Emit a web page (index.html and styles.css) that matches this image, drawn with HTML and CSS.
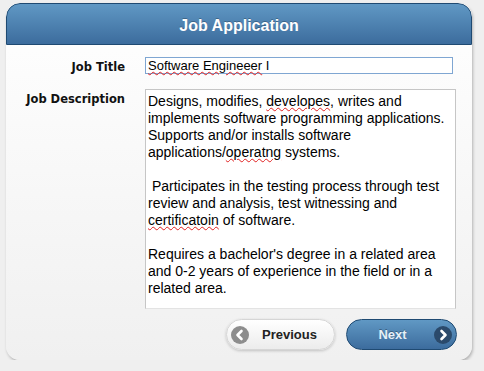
FILE: index.html
```html
<!DOCTYPE html>
<html lang="en">
<head>
    <meta charset="UTF-8">
    <title>Job Application</title>
    <link rel="stylesheet" href="styles.css">
</head>
<body>
    <div class="card">
        <div class="card-header">Job Application</div>
        <div class="card-body">
            <div class="field">
                <label class="field-label">Job Title</label>
                <div class="text-input"><span class="typo">Software Engineeer</span> I</div>
            </div>
            <div class="field">
                <label class="field-label">Job Description</label>
                <div class="text-area">
                    <p>Designs, modifies, <span class="typo">developes</span>, writes and implements software programming applications. Supports and/or installs software applications/<span class="typo">operatng</span> systems.</p>
                    <p>&nbsp;Participates in the testing process through test review and analysis, test witnessing and <span class="typo">certificatoin</span> of software.</p>
                    <p>Requires a bachelor's degree in a related area and 0-2 years of experience in the field or in a related area.</p>
                </div>
            </div>
            <div class="actions">
                <button class="btn btn-prev">
                    <span class="btn-icon">
                        <svg width="18" height="18" viewBox="0 0 18 18"><path d="M10.5 5 L6.5 9 L10.5 13" fill="none" stroke="#fff" stroke-width="2.6" stroke-linecap="round" stroke-linejoin="round"/></svg>
                    </span>
                    <span class="btn-text">Previous</span>
                </button>
                <button class="btn btn-next">
                    <span class="btn-text">Next</span>
                    <span class="btn-icon">
                        <svg width="18" height="18" viewBox="0 0 18 18"><path d="M7.5 5 L11.5 9 L7.5 13" fill="none" stroke="#fff" stroke-width="2.6" stroke-linecap="round" stroke-linejoin="round"/></svg>
                    </span>
                </button>
            </div>
        </div>
    </div>
</body>
</html>
```

FILE: styles.css
```css
body {
    margin: 0;
    padding: 3px 12px 0 6px;
    background: #efefef;
    font-family: "Liberation Sans", Arial, sans-serif;
}
.card {
    width: 466px;
    height: 357px;
    border-radius: 14px;
    background: linear-gradient(#ffffff, #f0f0f0);
    box-shadow: 1px 2px 3px rgba(0, 0, 0, 0.25);
    display: flex;
    flex-direction: column;
    overflow: hidden;
}
.card-header {
    height: 38px;
    padding-top: 2px;
    line-height: 40px;
    text-align: center;
    color: #fff;
    font-weight: bold;
    font-size: 16px;
    background: linear-gradient(#6098c4, #3c6c9d);
    border: 1px solid #1f4a72;
    border-radius: 14px 14px 0 0;
    text-shadow: 0 -1px 0 rgba(0, 0, 0, 0.25);
}
.card-body {
    flex: 1;
    padding: 12px 15px 0 0;
}
.field {
    display: flex;
    align-items: flex-start;
    margin-bottom: 15px;
}
.field-label {
    width: 119px;
    flex-shrink: 0;
    text-align: right;
    padding-right: 20px;
    padding-top: 3px;
    font-family: "DejaVu Sans", sans-serif;
    font-weight: bold;
    font-size: 11.5px;
    color: #111;
}
.field + .field .field-label {
    padding-top: 3px;
}
.text-input {
    width: 302px;
    height: 15px;
    border: 1px solid #7fa6d2;
    padding: 0 2px;
    font-size: 13px;
    line-height: 15px;
    background: #fff;
    color: #000;
}
.text-area {
    width: 306px;
    height: 210px;
    border: 1px solid #c6c6c6;
    border-bottom-color: #e3e3e3;
    padding: 3px 1px 5px 2px;
    background: #fff;
    font-size: 14px;
    line-height: 17px;
    color: #000;
}
.text-area p {
    margin: 0 0 17px;
}
.typo {
    text-decoration: underline wavy #e02020;
    text-decoration-thickness: 1px;
    text-underline-offset: 1px;
}
.actions {
    display: flex;
    justify-content: flex-end;
    gap: 11px;
    margin-top: -5px;
}
.btn {
    height: 31px;
    border-radius: 16px;
    display: flex;
    align-items: center;
    padding: 0 4px;
    font-family: "Liberation Sans", Arial, sans-serif;
    font-weight: bold;
    font-size: 13px;
    cursor: pointer;
}
.btn-text {
    flex: 1;
    text-align: center;
}
.btn-icon {
    width: 18px;
    height: 18px;
    border-radius: 50%;
    display: flex;
}
.btn-prev {
    width: 109px;
    background: linear-gradient(#ffffff, #ececec);
    border: 1px solid #d6d6d6;
    color: #222;
    box-shadow: 0 1px 3px rgba(0, 0, 0, 0.2);
}
.btn-prev .btn-icon {
    background: #8d8d8d;
}
.btn-next {
    width: 111px;
    background: linear-gradient(#6098c4, #3c6c9d);
    border: 1px solid #1f4a72;
    color: #e6f0f8;
    text-shadow: 0 -1px 0 rgba(0, 0, 0, 0.3);
}
.btn-next .btn-icon {
    background: #2b4a6b;
}
```
